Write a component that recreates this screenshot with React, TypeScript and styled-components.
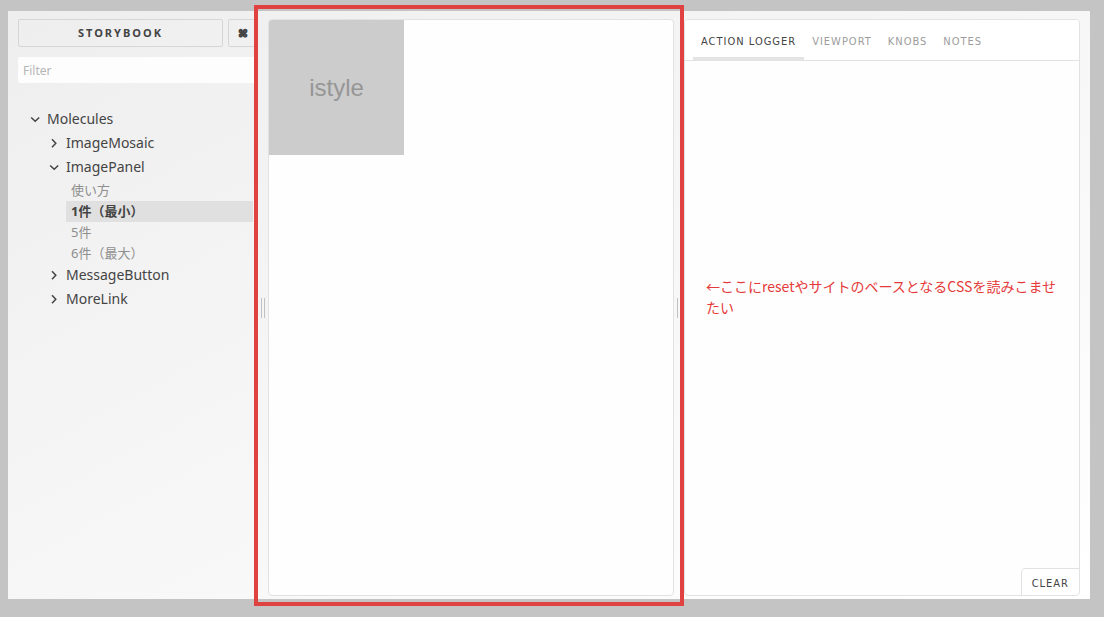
import React from 'react';
import styled, { createGlobalStyle } from 'styled-components';

const uiFont = '"Noto Sans", "Noto Sans CJK JP", sans-serif';
const labelFont = '"DejaVu Sans Condensed", "DejaVu Sans", sans-serif';

const GlobalStyle = createGlobalStyle`
  *, *::before, *::after { box-sizing: border-box; }
  body { margin: 0; background: #c4c4c4; font-family: ${uiFont}; color: #444; }
  button, input { font: inherit; color: inherit; margin: 0; }
  ul, h1, p { margin: 0; padding: 0; list-style: none; }
`;

const Page = styled.div`
  display: flex;
  min-height: 100vh;
  padding: 11px 14px 18px 8px;
`;

const Shell = styled.div`
  flex: 1;
  min-width: 0;
  display: grid;
  grid-template-columns: 240px 10px minmax(0, 406fr) 10px minmax(0, 396fr);
  padding: 8px 10px 3px;
  background: linear-gradient(to bottom right, #eee, #fff);
`;

const Sidebar = styled.nav`
  display: flex;
  flex-direction: column;
`;

const Header = styled.div`
  display: flex;
  gap: 5px;
  margin-bottom: 10px;
`;

const HeaderButton = styled.button`
  height: 28px;
  padding: 0;
  border: 1px solid #d6d6d6;
  border-radius: 2px;
  background: none;
  font-weight: 700;
  line-height: 26px;
`;

const TitleButton = styled(HeaderButton)`
  flex: 1;
  font-size: 11px;
  letter-spacing: 2px;
  text-transform: uppercase;
`;

const ShortcutButton = styled(HeaderButton)`
  flex: 0 0 30px;
  padding-top: 2px;
  line-height: 24px;
  font-family: "DejaVu Sans", sans-serif;
  font-size: 10px;
  -webkit-text-stroke: 1px #444;
`;

const Filter = styled.input`
  width: 100%;
  height: 26px;
  margin-bottom: 25px;
  padding: 0 5px;
  border: 0;
  border-radius: 2px;
  background: #fdfdfd;
  font-size: 12px;
  &::placeholder { color: #b5b5b5; opacity: 1; }
`;

const Tree = styled.ul`
  padding-left: 10px;
`;

const SubTree = styled.ul`
  padding-left: 19px;
`;

const Stories = styled.ul`
  padding: 0 5px 0 19px;
`;

const Group = styled.button`
  display: flex;
  align-items: center;
  gap: 5px;
  width: 100%;
  height: 24px;
  padding: 0 0 3px;
  border: 0;
  background: none;
  font-size: 14px;
  line-height: 21px;
  text-align: left;
`;

const Story = styled.a<{ $active?: boolean }>`
  display: block;
  padding-left: 5px;
  font-size: 13px;
  line-height: 21px;
  text-decoration: none;
  color: ${(p) => (p.$active ? '#444' : '#8e8e8e')};
  font-weight: ${(p) => (p.$active ? 700 : 400)};
  background: ${(p) => (p.$active ? '#e0e0e0' : 'none')};
`;

const Splitter = styled.div`
  display: flex;
  align-items: center;
  justify-content: center;
  gap: 2px;
`;

const Grip = styled.span`
  width: 1px;
  height: 20px;
  background: #c0c0c0;
`;

const PreviewColumn = styled.main`
  position: relative;
  display: flex;
`;

const Card = styled.section`
  flex: 1;
  min-width: 0;
  display: flex;
  flex-direction: column;
  border: 1px solid #e2e2e2;
  border-radius: 4px;
  background: #fefefe;
  overflow: hidden;
`;

const Thumbnail = styled.div`
  display: flex;
  align-items: center;
  justify-content: center;
  width: 135px;
  height: 135px;
  background: #ccc;
  color: #969696;
  font: 24px/28px "Liberation Sans", Arial, sans-serif;
`;

const Highlight = styled.div`
  position: absolute;
  inset: -14px -10px -10px -14px;
  border: 4px solid #e04242;
  pointer-events: none;
`;

const Tabs = styled.div`
  display: flex;
  height: 41px;
  padding: 0 8px;
  background: #fff;
  border-bottom: 1px solid #e2e2e2;
`;

const Tab = styled.button<{ $active?: boolean }>`
  padding: 5px 8px 0;
  border: 0;
  border-bottom: 3px solid ${(p) => (p.$active ? '#e4e4e4' : 'transparent')};
  background: none;
  color: ${(p) => (p.$active ? '#444' : '#9c9c9c')};
  font-family: ${labelFont};
  font-size: 11px;
  letter-spacing: 1px;
  text-transform: uppercase;
  white-space: nowrap;
`;

const LogArea = styled.div`
  flex: 1;
  display: flex;
  align-items: center;
  padding: 0 20px 64px 21px;
`;

const Note = styled.p`
  color: #e53a3a;
  font: 14px/21px "Noto Sans CJK JP", sans-serif;
`;

const ClearButton = styled.button`
  align-self: flex-end;
  height: 28px;
  margin: -28px -1px -1px 0;
  padding: 2px 10px 0;
  border: 1px solid #e2e2e2;
  border-radius: 4px 0 4px 0;
  background: #fff;
  font-family: ${labelFont};
  font-size: 11px;
  letter-spacing: 1px;
`;

const Chevron = ({ open }: { open?: boolean }) => (
  <svg width="14" height="14" viewBox="0 0 14 14" fill="none" stroke="#444" strokeWidth="1.5" aria-hidden="true">
    <path d={open ? 'M3.2 5.5 L7.2 9.3 L11.2 5.5' : 'M5 3.2 L8.8 7.2 L5 11.2'} />
  </svg>
);

const stories = ['使い方', '1件（最小）', '5件', '6件（最大）'];
const groups = ['ImageMosaic', 'ImagePanel', 'MessageButton', 'MoreLink'];
const tabs = ['Action Logger', 'Viewport', 'Knobs', 'Notes'];

export default function App() {
  return (
    <>
      <GlobalStyle />
      <Page>
        <Shell>
          <Sidebar>
            <Header>
              <TitleButton>Storybook</TitleButton>
              <ShortcutButton aria-label="Shortcuts">⌘</ShortcutButton>
            </Header>
            <Filter type="text" placeholder="Filter" aria-label="Filter" />
            <Tree>
              <li>
                <Group aria-expanded><Chevron open />Molecules</Group>
                <SubTree>
                  {groups.map((name) => {
                    const open = name === 'ImagePanel';
                    return (
                      <li key={name}>
                        <Group aria-expanded={open}><Chevron open={open} />{name}</Group>
                        {open && (
                          <Stories>
                            {stories.map((story, i) => (
                              <li key={story}><Story href="#" $active={i === 1}>{story}</Story></li>
                            ))}
                          </Stories>
                        )}
                      </li>
                    );
                  })}
                </SubTree>
              </li>
            </Tree>
          </Sidebar>
          <Splitter><Grip /><Grip /></Splitter>
          <PreviewColumn>
            <Card><Thumbnail>istyle</Thumbnail></Card>
            <Highlight />
          </PreviewColumn>
          <Splitter><Grip /><Grip /></Splitter>
          <Card>
            <Tabs role="tablist">
              {tabs.map((tab, i) => (
                <Tab key={tab} role="tab" aria-selected={i === 0} $active={i === 0}>{tab}</Tab>
              ))}
            </Tabs>
            <LogArea>
              <Note>←ここにresetやサイトのベースとなるCSSを読みこませたい</Note>
            </LogArea>
            <ClearButton>CLEAR</ClearButton>
          </Card>
        </Shell>
      </Page>
    </>
  );
}
